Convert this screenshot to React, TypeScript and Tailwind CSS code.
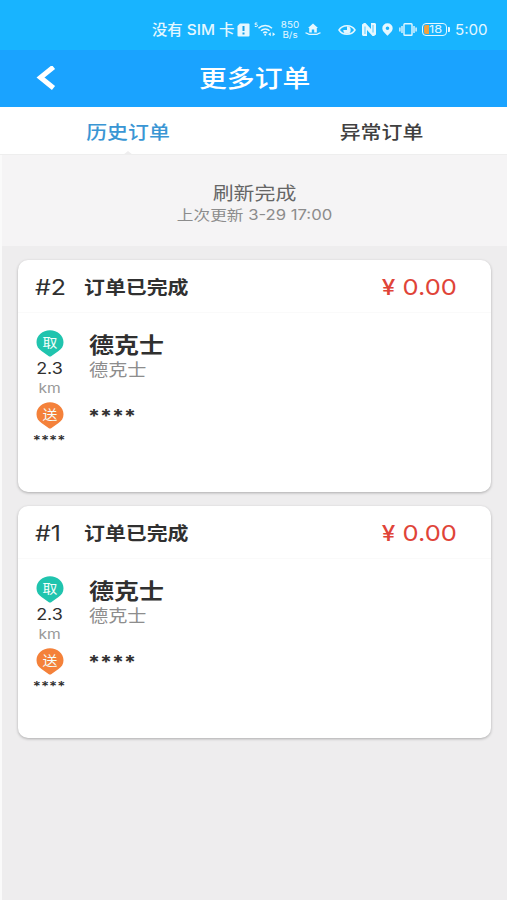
import clsx from 'clsx'
import type { ReactNode } from 'react'

interface Order {
  no: number
  status: string
  price: string
  shop: string
  address: string
  distance: string
}

const ORDERS: Order[] = [
  { no: 2, status: '订单已完成', price: '0.00', shop: '德克士', address: '德克士', distance: '2.3' },
  { no: 1, status: '订单已完成', price: '0.00', shop: '德克士', address: '德克士', distance: '2.3' },
]

// Glyphs are drawn a little wider than they are tall
function Wide({ children, className, scale = 'scale-x-[1.16]' }: { children: ReactNode; className?: string; scale?: string }) {
  return <span className={clsx('block whitespace-nowrap', scale, className)}>{children}</span>
}

function StatusBar() {
  return (
    <div className="h-[50px] bg-[#18b4ff] text-[#e4f7ff] flex items-center pt-[9px] pl-[152px]">
      <Wide scale="scale-x-[1.06]" className="origin-left w-[85px] text-[14.5px] leading-5 font-medium">没有 SIM 卡</Wide>
      <svg width="13" height="14" viewBox="0 0 13 14" className="shrink-0">
        <path d="M3 0.5h8.500a1 1 0 0 1 1 1v11a1 1 0 0 1-1 1h-10a1 1 0 0 1-1-1V3z" fill="currentColor" />
        <path d="M6.500 3v5M6.500 9.500v2" stroke="#18a0e8" strokeWidth="2" />
      </svg>
      <svg width="22" height="15" viewBox="0 0 22 15" className="shrink-0 ml-[4px]" fill="none" stroke="currentColor">
        <path d="M3.300 1H1.200v1.700h1.400a.8.8 0 0 1 0 1.800H.8" strokeWidth="1" />
        <path d="M4.500 6.200a9.500 9.500 0 0 1 13.500 0M7 8.800a6 6 0 0 1 8.500 0M9.200 11a3 3 0 0 1 4 0" strokeWidth="1.500" />
        <circle cx="11.200" cy="12.800" r="1" fill="currentColor" stroke="none" />
        <path d="M14.200 12.300l2.600-2v4zM21.200 12.300l-2.600-2v4z" fill="currentColor" stroke="none" />
      </svg>
      <div className="w-[20px] ml-[4px] text-center text-[8.500px] leading-[10px]">
        <Wide>850</Wide>
        <Wide>B/s</Wide>
      </div>
      <svg width="16" height="13" viewBox="0 0 16 13" className="shrink-0 ml-[5px]">
        <path d="M8 0.500L3 5h1.200v4.500h2.600V6.500h2.400v3h2.600V5H13z" fill="currentColor" />
        <path d="M0.500 9.800c2 0 2 1.500 4 1.500h7c2 0 2-1.500 4-1.500" fill="none" stroke="currentColor" strokeWidth="1.300" />
      </svg>
      <svg width="18" height="12" viewBox="0 0 18 12" className="shrink-0 ml-[17px]">
        <path d="M1 6c3.500-5.600 12.500-5.600 16 0c-3.500 5.600-12.500 5.600-16 0z" fill="none" stroke="currentColor" strokeWidth="1.500" />
        <path d="M9 2.300a3.700 3.700 0 1 1-3.700 3.700H9z" fill="currentColor" />
      </svg>
      <svg width="14" height="13" viewBox="0 0 14 13" className="shrink-0 ml-[6px]">
        <path d="M0 1.500L2 0h1.500l5.500 6V0h4l1 1v10.500L12 13h-1.500L5 7v6H1l-1-1z" fill="currentColor" />
        <path d="M3 3.500V11M11 2v7.500" stroke="#18b4ff" strokeWidth="0.700" />
      </svg>
      <svg width="11" height="13" viewBox="0 0 11 13" className="shrink-0 ml-[6px]">
        <path fillRule="evenodd" d="M5.500 0.300a5.200 5 0 0 1 5.200 5C10.700 8.300 7.500 10.700 5.500 12.700C3.500 10.700 0.300 8.300 0.300 5.300a5.200 5 0 0 1 5.200-5zM5.500 3.500a1.800 1.800 0 1 0 0 3.600a1.800 1.800 0 0 0 0-3.600z" fill="currentColor" />
      </svg>
      <svg width="18" height="13" viewBox="0 0 18 13" className="shrink-0 ml-[6px]" fill="none" stroke="currentColor" strokeWidth="1.400">
        <rect x="5" y="0.700" width="8" height="11.600" rx="0.800" />
        <path d="M3 3v7M0.900 4.500v4M15 3v7M17.100 4.500v4" />
      </svg>
      <div className="ml-[5px] w-[25px] h-[13px] shrink-0 rounded-[4px] border border-current flex items-center p-px">
        <span className="w-[5px] h-[9px] rounded-l-[2px] bg-[#f0a040]" />
        <Wide className="origin-left text-[11px] leading-[11px]">18</Wide>
      </div>
      <span className="w-[2px] h-[5px] bg-current rounded-r-[1px] ml-px shrink-0" />
      <Wide scale="scale-x-[1.08]" className="origin-left ml-[5px] text-[14px] leading-5">5:00</Wide>
    </div>
  )
}

function Marker({ label, className }: { label: string; className: string }) {
  return (
    <svg width="28" height="27" viewBox="0 0 28 27" className={className}>
      <path d="M14 0.300C21.500 0.300 27.500 5.600 27.500 12.300C27.500 16.500 25.500 19 22.500 21L15.500 26Q14 27.200 12.500 26L5.500 21C2.500 19 0.500 16.500 0.500 12.300C0.500 5.600 6.500 0.300 14 0.300z" fill="currentColor" />
      <text x="12.200" y="17.100" textAnchor="middle" fontSize="13" fill="#f4fffb" transform="scale(1.15 1)">{label}</text>
    </svg>
  )
}

function OrderCard({ order }: { order: Order }) {
  return (
    <div className="h-[232px] bg-white rounded-[10px] shadow-[0_1px_3px_rgba(0,0,0,0.28)] text-[#303030]">
      <div className="h-[53px] flex items-center pl-[17px] pr-[34px] border-b border-[#fafafa]">
        <Wide className="origin-left w-[49px] text-[21.500px] leading-[51px] pt-[3px]">#{order.no}</Wide>
        <Wide className="origin-left text-[18px] font-bold pt-[2px]">{order.status}</Wide>
        <div className="ml-auto flex items-center text-[#e04438] pt-[2px]">
          <Wide scale="scale-x-[1.16]" className="w-[15px] text-[21px] font-medium mr-[12px] pt-px">¥</Wide>
          <Wide scale="scale-x-[1.16]" className="origin-right text-[22px]">{order.price}</Wide>
        </div>
      </div>
      <div className="flex pt-[17px]">
        <div className="w-[63px] shrink-0 flex flex-col items-center">
          <Marker label="取" className="text-[#20c4ae]" />
          <Wide className="text-[15.500px] leading-5 mt-[2px]">{order.distance}</Wide>
          <Wide className="text-[13.500px] leading-[18px] text-[#999]">km</Wide>
          <Marker label="送" className="text-[#f4813a] mt-[5px]" />
          <Wide className="text-[13px] leading-5 font-semibold pt-px">****</Wide>
        </div>
        <div className="pl-[8px]">
          <Wide className="origin-left text-[21.500px] leading-[30px] font-bold">{order.shop}</Wide>
          <Wide className="origin-left text-[16.500px] leading-5 text-[#8d8d8d]">{order.address}</Wide>
          <Wide className="origin-left text-[18.500px] leading-6 font-bold mt-[24px] -ml-px">****</Wide>
        </div>
      </div>
    </div>
  )
}

export default function App() {
  return (
    <div className="h-[900px] w-[507px] overflow-hidden bg-[#eeedee] font-['Inter','Noto_Sans_CJK_SC',sans-serif]">
      <StatusBar />
      <header className="h-[57px] bg-[#1aa3ff] text-white flex items-center pl-[36px]">
        <svg width="20" height="26" viewBox="0 0 20 26" fill="none" stroke="currentColor" strokeWidth="5">
          <path d="M17.500 1L4.500 11.500L17.500 22" />
        </svg>
        <Wide className="ml-[143px] origin-left text-[24px] leading-8 font-medium">更多订单</Wide>
      </header>
      <nav className="h-[48px] bg-white flex text-[18px] leading-[52px] text-center font-medium border-b border-[#eee]">
        <div className="w-[256px] flex flex-col items-center text-[#3a96d4]">
          <Wide className="h-[44px]">历史订单</Wide>
          <svg width="10" height="4" viewBox="0 0 10 4">
            <path d="M0 4L5 0L10 4z" fill="#eeedee" />
          </svg>
        </div>
        <div className="w-[251px] text-[#404040]">
          <Wide>异常订单</Wide>
        </div>
      </nav>
      <div className="border-l-2 border-[#fafafa] h-[746px]">
        <div className="h-[91px] bg-[#f5f4f5] pt-[28px] text-center">
          <Wide className="text-[18px] leading-[22px] text-[#666]">刷新完成</Wide>
          <Wide scale="scale-x-[1.19]" className="text-[14px] leading-[20px] text-[#8c8c8c]">上次更新 3-29 17:00</Wide>
        </div>
        <main className="flex flex-col gap-[14px] pt-[14px] pl-[16px] pr-[16px]">
          {ORDERS.map(o => (
            <OrderCard key={o.no} order={o} />
          ))}
        </main>
      </div>
    </div>
  )
}
